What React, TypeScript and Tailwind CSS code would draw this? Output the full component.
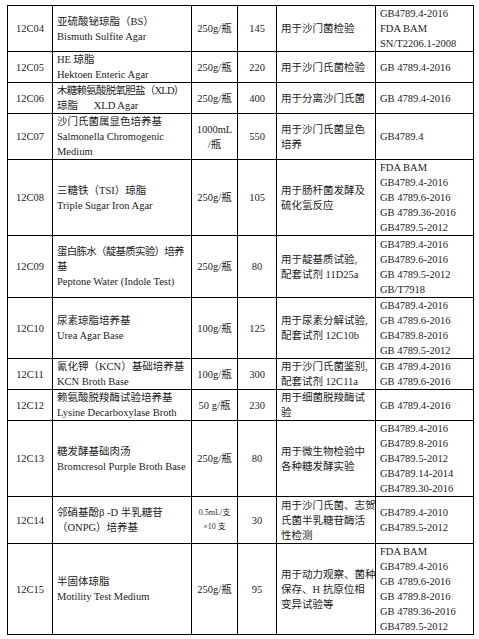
import React from "react";

type Row = {
  code: string;
  name: string[];
  spec: string[];
  specSmall?: boolean;
  num: string;
  use: string[];
  std: string[];
  h: number;
};

const rows: Row[] = [
  { code: "12C04", name: ["亚硫酸铋琼脂（BS）", "Bismuth Sulfite Agar"], spec: ["250g/瓶"], num: "145", use: ["用于沙门菌检验"], std: ["GB4789.4-2016", "FDA BAM", "SN/T2206.1-2008"], h: 45 },
  { code: "12C05", name: ["HE 琼脂", "Hektoen Enteric Agar"], spec: ["250g/瓶"], num: "220", use: ["用于沙门氏菌检验"], std: ["GB 4789.4-2016"], h: 31 },
  { code: "12C06", name: ["~木糖赖氨酸脱氧胆盐（XLD）", "琼脂\u00a0\u00a0\u00a0\u00a0\u00a0\u00a0XLD Agar"], spec: ["250g/瓶"], num: "400", use: ["用于分离沙门氏菌"], std: ["GB 4789.4-2016"], h: 31 },
  { code: "12C07", name: ["沙门氏菌属显色培养基", "Salmonella Chromogenic", "Medium"], spec: ["1000mL", "/瓶"], num: "550", use: ["用于沙门氏菌显色", "培养"], std: ["GB4789.4"], h: 46 },
  { code: "12C08", name: ["三糖铁（TSI）琼脂", "Triple Sugar Iron Agar"], spec: ["250g/瓶"], num: "105", use: ["用于肠杆菌发酵及", "硫化氢反应"], std: ["FDA BAM", "GB4789.4-2016", "GB 4789.6-2016", "GB 4789.36-2016", "GB4789.5-2012"], h: 76 },
  { code: "12C09", name: ["~蛋白胨水（靛基质实验）培养", "基", "Peptone Water (Indole Test)"], spec: ["250g/瓶"], num: "80", use: ["用于靛基质试验,", "配套试剂 11D25a"], std: ["GB4789.4-2016", "GB4789.6-2016", "GB 4789.5-2012", "GB/T7918"], h: 62 },
  { code: "12C10", name: ["尿素琼脂培养基", "Urea Agar Base"], spec: ["100g/瓶"], num: "125", use: ["用于尿素分解试验,", "配套试剂 12C10b"], std: ["GB4789.4-2016", "GB 4789.6-2016", "GB4789.8-2016", "GB 4789.5-2012"], h: 61 },
  { code: "12C11", name: ["氰化钾（KCN）基础培养基", "KCN Broth Base"], spec: ["100g/瓶"], num: "300", use: ["用于沙门氏菌鉴别,", "配套试剂 12C11a"], std: ["GB 4789.4-2016", "GB 4789.6-2016"], h: 31 },
  { code: "12C12", name: ["赖氨酸脱羧酶试验培养基", "Lysine Decarboxylase Broth"], spec: ["50 g/瓶"], num: "230", use: ["用于细菌脱羧酶试", "验"], std: ["GB 4789.4-2016"], h: 31 },
  { code: "12C13", name: ["糖发酵基础肉汤", "Bromcresol Purple Broth Base"], spec: ["250g/瓶"], num: "80", use: ["用于微生物检验中", "各种糖发酵实验"], std: ["GB4789.4-2016", "GB4789.8-2016", "GB4789.5-2012", "GB4789.14-2014", "GB4789.30-2016"], h: 76 },
  { code: "12C14", name: ["邻硝基酚β -D 半乳糖苷", "（ONPG）培养基"], spec: ["0.5mL/支", "×10 支"], specSmall: true, num: "30", use: ["用于沙门氏菌、志贺", "氏菌半乳糖苷酶活", "性检测"], std: ["GB4789.4-2010", "GB4789.5-2012"], h: 47 },
  { code: "12C15", name: ["半固体琼脂", "Motility Test Medium"], spec: ["250g/瓶"], num: "95", use: ["用于动力观察、菌种", "保存、H 抗原位相", "变异试验等"], std: ["FDA BAM", "GB4789.4-2016", "GB 4789.6-2016", "GB 4789.8-2016", "GB 4789.36-2016", "GB4789.5-2012"], h: 91 },
];

function Lines({ items }: { items: string[] }) {
  return (
    <>
      {items.map((t, i) =>
        t.startsWith("~") ? (
          <div key={i} className="whitespace-nowrap tracking-[-0.75px]">
            {t.slice(1)}
          </div>
        ) : (
          <div key={i} className="whitespace-nowrap">
            {t}
          </div>
        )
      )}
    </>
  );
}

export default function App() {
  return (
    <div className="w-[479px] h-[639px] bg-white pt-[5px] pl-[7px] text-[10.5px] leading-[15px] text-[#1c1c1c] [font-family:'Liberation_Serif','Noto_Sans_CJK_SC',serif]">
      <table className="border-collapse table-fixed w-[466px]">
        <colgroup>
          <col className="w-[45px]" />
          <col className="w-[139px]" />
          <col className="w-[46px]" />
          <col className="w-[39px]" />
          <col className="w-[99px]" />
          <col className="w-[98px]" />
        </colgroup>
        <tbody>
          {rows.map((r) => (
            <tr key={r.code} style={{ height: r.h }}>
              <td className="border border-black text-center align-middle p-0">{r.code}</td>
              <td className="border border-black align-middle pl-[4px] pr-0 py-0 overflow-hidden">
                <Lines items={r.name} />
              </td>
              <td className={`border border-black text-center align-middle p-0 ${r.specSmall ? "text-[8px] leading-[14px]" : ""}`}>
                <Lines items={r.spec} />
              </td>
              <td className="border border-black text-center align-middle p-0">{r.num}</td>
              <td className="border border-black align-middle px-[4px] py-0 overflow-hidden">
                <Lines items={r.use} />
              </td>
              <td className="border border-black align-middle px-[4px] py-0 overflow-hidden">
                <Lines items={r.std} />
              </td>
            </tr>
          ))}
        </tbody>
      </table>
    </div>
  );
}
